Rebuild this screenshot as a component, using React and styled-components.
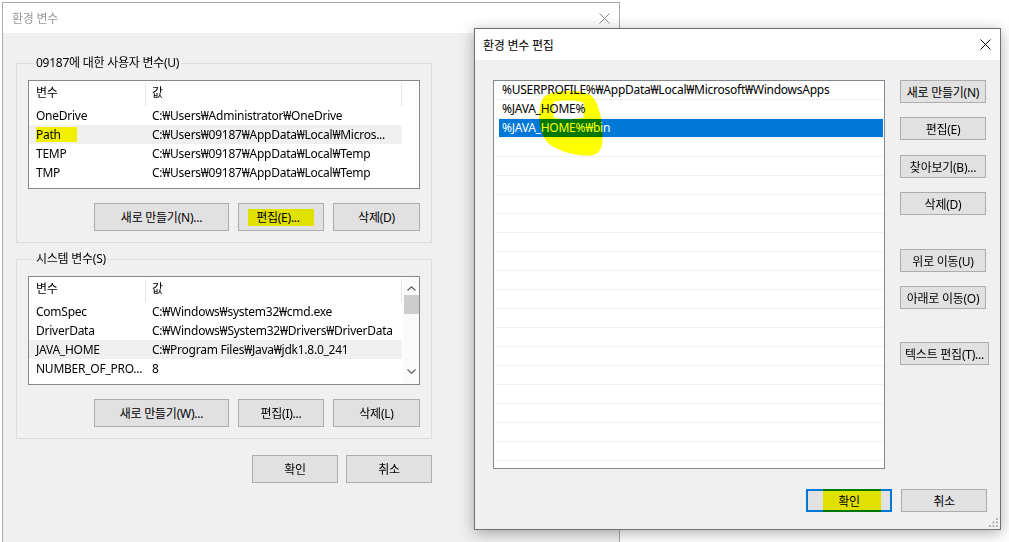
import React from "react";
import styled, { createGlobalStyle } from "styled-components";

const GlobalStyle = createGlobalStyle`
  html, body {
    margin: 0;
    padding: 0;
    background: #fff;
  }
  body {
    font-family: "Noto Sans", "Noto Sans CJK KR", sans-serif;
    font-size: 12px;
    letter-spacing: -0.25px;
    color: #000;
  }
`;

const Desktop = styled.div`
  position: relative;
  width: 1009px;
  height: 542px;
  overflow: hidden;
  background: #fff;
`;

// windows sit on the desktop at their own place
const Window = styled.div`
  position: absolute;
  left: ${(p) => p.$x}px;
  top: ${(p) => p.$y}px;
  width: ${(p) => p.$w}px;
  height: ${(p) => p.$h}px;
  box-sizing: border-box;
  border: 1px solid ${(p) => (p.$active ? "#707070" : "#aaaaaa")};
  background: #f0f0f0;
  display: flex;
  flex-direction: column;
  box-shadow: ${(p) => (p.$active ? "0 3px 14px rgba(0,0,0,0.32)" : "none")};
`;

const TitleBar = styled.div`
  height: ${(p) => p.$h}px;
  flex: none;
  background: #fff;
  display: flex;
  align-items: center;
  justify-content: space-between;
  padding: 0 9px 0 ${(p) => p.$pl}px;
  color: ${(p) => (p.$active ? "#000" : "#999")};
  font-size: 12px;
`;

const CloseIcon = ({ color }) => (
  <svg width="11" height="11" viewBox="0 0 11 11">
    <path d="M0.5 0.5 L10.5 10.5 M10.5 0.5 L0.5 10.5" stroke={color} strokeWidth="1" />
  </svg>
);

const LeftBody = styled.div`
  display: flex;
  flex-direction: column;
  padding: 22px 0 0 13px;
`;

const Group = styled.fieldset`
  width: 416px;
  box-sizing: border-box;
  margin: ${(p) => p.$mt || 0}px 0 0 0;
  padding: 9px 11px 11px 11px;
  border: 1px solid #dcdcdc;
  min-width: 0;
`;

const Legend = styled.legend`
  margin-left: 6px;
  padding: 0 2px;
  line-height: 16px;
  font-size: 12px;
`;

const ListView = styled.div`
  width: 392px;
  height: 109px;
  box-sizing: border-box;
  border: 1px solid #828790;
  background: #fff;
  display: flex;
  overflow: hidden;
`;

const Table = styled.div`
  display: flex;
  flex-direction: column;
  width: 373px;
  flex: none;
`;

const Header = styled.div`
  display: flex;
  height: 25px;
  flex: none;
`;

const HeaderCell = styled.div`
  width: ${(p) => p.$w}px;
  box-sizing: border-box;
  height: 23px;
  margin-top: 2px;
  line-height: 20px;
  padding-left: ${(p) => p.$pl}px;
  border-right: 1px solid #e5e5e5;
`;

const Row = styled.div`
  display: flex;
  height: 19px;
  line-height: 19px;
  background: ${(p) => (p.$selected ? "#f0f0f0" : "transparent")};
  white-space: nowrap;
`;

const Cell = styled.div`
  width: ${(p) => (p.$w ? `${p.$w}px` : "auto")};
  flex: ${(p) => (p.$w ? "none" : "1")};
  box-sizing: border-box;
  padding-left: ${(p) => p.$pl}px;
  overflow: hidden;
`;

const Highlight = styled.span`
  display: inline-block;
  background: #ffff00;
  mix-blend-mode: multiply;
  line-height: ${(p) => p.$lh || 15}px;
  padding: ${(p) => p.$pad || "0"};
`;

const Scrollbar = styled.div`
  width: 17px;
  flex: none;
  margin-left: 1px;
  background: #fafafa;
  display: flex;
  flex-direction: column;
`;

const ScrollArrow = styled.div`
  height: 17px;
  display: flex;
  align-items: ${(p) => (p.$down ? "flex-start" : "flex-end")};
  justify-content: center;
  padding: ${(p) => (p.$down ? "2px 0 0" : "0 0 3px")};
  box-sizing: border-box;
`;

const Thumb = styled.div`
  height: 19px;
  margin: 1px 1px 0;
  background: #cdcdcd;
`;

const Spacer = styled.div`
  flex: 1;
`;

const ButtonRow = styled.div`
  display: flex;
  justify-content: flex-end;
  gap: ${(p) => p.$gap || 9}px;
  margin-top: ${(p) => p.$mt || 0}px;
  padding-right: ${(p) => p.$pr || 0}px;
  width: ${(p) => (p.$w ? `${p.$w}px` : "auto")};
`;

const Button = styled.button`
  position: relative;
  width: ${(p) => p.$w}px;
  height: ${(p) => p.$h}px;
  margin-top: ${(p) => p.$mt || 0}px;
  box-sizing: border-box;
  flex: none;
  padding: 0;
  background: #e1e1e1;
  border: ${(p) => (p.$focused ? "2px solid #0078d7" : "1px solid #adadad")};
  font-family: "Noto Sans", "Noto Sans CJK KR", sans-serif;
  font-size: 12px;
  letter-spacing: -0.25px;
  color: #000;
  white-space: nowrap;
  overflow: visible;
  display: flex;
  align-items: center;
  justify-content: center;
`;

const Scribble = styled.span`
  position: absolute;
  left: ${(p) => p.$x}px;
  top: ${(p) => p.$y}px;
  width: ${(p) => p.$w}px;
  height: ${(p) => p.$h}px;
  background: #ffff00;
  mix-blend-mode: multiply;
  pointer-events: none;
`;

const Chevron = ({ down }) => (
  <svg width="9" height="5" viewBox="0 0 9 5">
    <polyline
      points={down ? "0.5,0.5 4.5,4.2 8.5,0.5" : "0.5,4.5 4.5,0.8 8.5,4.5"}
      fill="none"
      stroke="#606060"
      strokeWidth="1.2"
    />
  </svg>
);

const RightBody = styled.div`
  flex: 1;
  display: flex;
  flex-direction: column;
  padding: 20px 11px 16px 18px;
`;

const TopArea = styled.div`
  display: flex;
  gap: 15px;
`;

const EditList = styled.div`
  position: relative;
  width: 392px;
  height: 389px;
  box-sizing: border-box;
  border: 1px solid #828790;
  background: #fff;
  padding-left: 1px;
  overflow: hidden;
`;

const EditRow = styled.div`
  height: 19px;
  box-sizing: border-box;
  border-bottom: 1px solid #f0f0f0;
  padding: 0 1px 0 4px;
  display: flex;
`;

const EditItem = styled.div`
  flex: 1;
  line-height: 18px;
  padding-left: 3px;
  white-space: nowrap;
  background: ${(p) => (p.$selected ? "#0078d7" : "transparent")};
  color: ${(p) => (p.$selected ? "#fff" : "#000")};
`;

const SideButtons = styled.div`
  display: flex;
  flex-direction: column;
  align-items: flex-start;
  width: 89px;
`;

const Overlay = styled.svg`
  position: absolute;
  left: 0;
  top: 0;
  width: 100%;
  height: 100%;
  mix-blend-mode: multiply;
  pointer-events: none;
`;

const Grip = styled.svg`
  position: absolute;
  right: 2px;
  bottom: 2px;
`;

const userVars = [
  ["OneDrive", "C:₩Users₩Administrator₩OneDrive"],
  ["Path", "C:₩Users₩09187₩AppData₩Local₩Micros...", true],
  ["TEMP", "C:₩Users₩09187₩AppData₩Local₩Temp"],
  ["TMP", "C:₩Users₩09187₩AppData₩Local₩Temp"],
];

const sysVars = [
  ["ComSpec", "C:₩Windows₩system32₩cmd.exe"],
  ["DriverData", "C:₩Windows₩System32₩Drivers₩DriverData"],
  ["JAVA_HOME", "C:₩Program Files₩Java₩jdk1.8.0_241", true],
  ["NUMBER_OF_PRO...", "8"],
];

const pathEntries = [
  "%USERPROFILE%₩AppData₩Local₩Microsoft₩WindowsApps",
  "%JAVA_HOME%",
  "%JAVA_HOME%₩bin",
];

const VarTable = ({ rows, markFirst }) => (
  <Table>
    <Header>
      <HeaderCell $w={117} $pl={7}>변수</HeaderCell>
      <HeaderCell $w={256} $pl={6}>값</HeaderCell>
    </Header>
    {rows.map(([name, value, sel]) => (
      <Row key={name} $selected={sel}>
        <Cell $w={117} $pl={7}>
          {markFirst && sel ? <Highlight $pad="0 16px 0 0">{name}</Highlight> : name}
        </Cell>
        <Cell $pl={6}>{value}</Cell>
      </Row>
    ))}
  </Table>
);

export default function App() {
  const emptyRows = Array.from({ length: 18 });
  return (
    <Desktop>
      <GlobalStyle />

      <Window $x={2} $y={2} $w={618} $h={570}>
        <TitleBar $h={30} $pl={9}>
          <span>환경 변수</span>
          <CloseIcon color="#8a8a8a" />
        </TitleBar>
        <LeftBody>
          <Group>
            <Legend>09187에 대한 사용자 변수(U)</Legend>
            <ListView>
              <VarTable rows={userVars} markFirst />
            </ListView>
            <ButtonRow $mt={14}>
              <Button $w={135} $h={28}>새로 만들기(N)...</Button>
              <Button $w={86} $h={28}>
                <Highlight $lh={17} $pad="0 14px 0 8px">편집(E)...</Highlight>
              </Button>
              <Button $w={87} $h={28}>삭제(D)</Button>
            </ButtonRow>
          </Group>

          <Group $mt={8}>
            <Legend>시스템 변수(S)</Legend>
            <ListView>
              <VarTable rows={sysVars} />
              <Scrollbar>
                <ScrollArrow>
                  <Chevron />
                </ScrollArrow>
                <Thumb />
                <Spacer />
                <ScrollArrow $down>
                  <Chevron down />
                </ScrollArrow>
              </Scrollbar>
            </ListView>
            <ButtonRow $mt={14}>
              <Button $w={135} $h={28}>새로 만들기(W)...</Button>
              <Button $w={86} $h={28}>편집(I)...</Button>
              <Button $w={87} $h={28}>삭제(L)</Button>
            </ButtonRow>
          </Group>

          <ButtonRow $mt={16} $gap={8} $w={416}>
            <Button $w={86} $h={28}>확인</Button>
            <Button $w={86} $h={28}>취소</Button>
          </ButtonRow>
        </LeftBody>
      </Window>

      <Window $x={474} $y={28} $w={527} $h={502} $active>
        <TitleBar $h={31} $pl={8} $active>
          <span>환경 변수 편집</span>
          <CloseIcon color="#000" />
        </TitleBar>
        <RightBody>
          <TopArea>
            <EditList>
              {pathEntries.map((p, i) => (
                <EditRow key={p}>
                  <EditItem $selected={i === 2}>{p}</EditItem>
                </EditRow>
              ))}
              {emptyRows.map((_, i) => (
                <EditRow key={`e${i}`}>
                  <EditItem />
                </EditRow>
              ))}
              <Overlay viewBox="0 0 392 389">
                <g transform="translate(-493,-80)">
                  <path
                    fillRule="evenodd"
                    fill="#ffff00"
                    d="M543 96 C553 88 580 88 590 94 C598 100 603 120 602 140 C602 150 596 156 585 155 C570 154 556 150 547 142 C538 132 535 108 543 96 Z M553 101 C560 99 577 99 583 102 L583 117 C572 119 560 119 553 117 Z"
                  />
                </g>
              </Overlay>
            </EditList>
            <SideButtons>
              <Button $w={86} $h={23}>새로 만들기(N)</Button>
              <Button $w={86} $h={23} $mt={14}>편집(E)</Button>
              <Button $w={86} $h={23} $mt={15}>찾아보기(B)...</Button>
              <Button $w={86} $h={23} $mt={14}>삭제(D)</Button>
              <Button $w={86} $h={23} $mt={34}>위로 이동(U)</Button>
              <Button $w={86} $h={23} $mt={14}>아래로 이동(O)</Button>
              <Button $w={89} $h={23} $mt={33}>텍스트 편집(T)...</Button>
            </SideButtons>
          </TopArea>
          <ButtonRow $mt={20} $gap={9} $pr={2}>
            <Button $w={86} $h={23} $focused>
              확인
              <Scribble $x={15} $y={-2} $w={58} $h={23} />
            </Button>
            <Button $w={86} $h={23}>취소</Button>
          </ButtonRow>
        </RightBody>
        <Grip width="9" height="9" viewBox="0 0 9 9">
          <g fill="#b4b4b4">
            <rect x="7" y="0" width="2" height="2" />
            <rect x="3.5" y="3.5" width="2" height="2" />
            <rect x="7" y="3.5" width="2" height="2" />
            <rect x="0" y="7" width="2" height="2" />
            <rect x="3.5" y="7" width="2" height="2" />
            <rect x="7" y="7" width="2" height="2" />
          </g>
        </Grip>
      </Window>
    </Desktop>
  );
}
